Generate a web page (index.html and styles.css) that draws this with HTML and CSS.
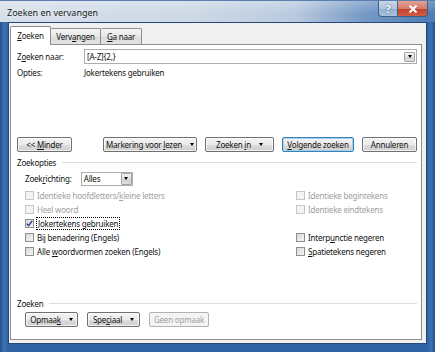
FILE: index.html
```html
<!DOCTYPE html>
<html lang="nl">
<head>
  <meta charset="UTF-8" />
  <title>Zoeken en vervangen</title>
  <link rel="stylesheet" href="styles.css">
</head>
<body>

<div class="window">
  <div class="titlebar">
    <span class="title">Zoeken en vervangen</span>
    <div class="caption">
      <span class="cap-btn help">?</span>
      <span class="cap-btn close">
        <svg width="10" height="8" viewBox="0 0 10 8"><path d="M1.5 0.5 L8.5 7.5 M8.5 0.5 L1.5 7.5" stroke="#fff" stroke-width="2"/></svg>
      </span>
    </div>
  </div>

  <div class="frame">
    <div class="client">
      <div class="tabs">
        <div class="tab active"><u>Z</u>oeken</div>
        <div class="tab">Verv<u>a</u>ngen</div>
        <div class="tab"><u>G</u>a naar</div>
      </div>

      <div class="panel">
        <div class="row find-row">
          <span class="label">Z<u>o</u>eken naar:</span>
          <div class="combo">
            <span class="combo-text">[A-Z]{2,}</span>
            <span class="drop"><i class="arrow"></i></span>
          </div>
        </div>
        <div class="row options-row">
          <span class="label">Opties:</span>
          <span>Jokertekens gebruiken</span>
        </div>

        <div class="buttons">
          <span class="btn w-minder"><span>&lt;&lt; <u>M</u>inder</span></span>
          <span class="btn w-mark"><span>Markering voor <u>l</u>ezen</span><i class="arrow"></i></span>
          <span class="btn w-in"><span>Zoeken <u>i</u>n</span><i class="arrow"></i></span>
          <span class="btn default w-next"><span><u>V</u>olgende zoeken</span></span>
          <span class="btn w-cancel"><span>Annuleren</span></span>
        </div>

        <div class="group-head first">
          <span>Zoekopties</span>
          <span class="rule"></span>
        </div>

        <div class="direction">
          <span>Zoek<u>r</u>ichting:</span>
          <div class="select">
            <span class="select-text">Alles</span>
            <span class="drop"><i class="arrow"></i></span>
          </div>
        </div>

        <div class="checks">
          <label class="check disabled"><span class="cb"></span><span>Identieke hoofdletters/<u>k</u>leine letters</span></label>
          <label class="check disabled"><span class="cb"></span><span>Identieke begintekens</span></label>
          <label class="check disabled"><span class="cb"></span><span>Heel woord</span></label>
          <label class="check disabled"><span class="cb"></span><span>Identieke eindtekens</span></label>
          <label class="check"><span class="cb checked"><svg width="7" height="7" viewBox="0 0 7 7"><path d="M0.8 3.6 L2.6 5.6 L6.2 0.8" fill="none" stroke="#24399b" stroke-width="1.4"/></svg></span><span class="focus"><u>J</u>okertekens gebruiken</span></label>
          <span></span>
          <label class="check"><span class="cb"></span><span>Bij benadering (En<u>g</u>els)</span></label>
          <label class="check"><span class="cb"></span><span>Interp<u>u</u>nctie negeren</span></label>
          <label class="check"><span class="cb"></span><span>Alle <u>w</u>oordvormen zoeken (Engels)</span></label>
          <label class="check"><span class="cb"></span><span><u>S</u>patietekens negeren</span></label>
        </div>

        <div class="group-head second">
          <span>Zoeken</span>
          <span class="rule"></span>
        </div>

        <div class="buttons bottom">
          <span class="btn w-fmt"><span>Opmaa<u>k</u></span><i class="arrow"></i></span>
          <span class="btn w-spec"><span>Spe<u>c</u>iaal</span><i class="arrow"></i></span>
          <span class="btn disabled w-none"><span>Geen opmaak</span></span>
        </div>
      </div>
    </div>
  </div>
</div>

</body>
</html>
```

FILE: styles.css
```css
html, body {
  margin: 0;
  padding: 0;
  background: #fff;
}

body {
  font-family: 'Noto Sans', 'Liberation Sans', sans-serif;
  font-size: 8px;
  letter-spacing: -0.2px;
  color: #111;
}

u {
  text-decoration: underline;
  text-underline-offset: 1px;
}

.window {
  width: 435px;
  height: 352px;
  display: flex;
  flex-direction: column;
  background: linear-gradient(90deg, #24518c 0px, #3d73b3 4px, #2f62a2 8px, #2f62a2 427px, #3d73b3 431px, #24518c 435px);
  box-sizing: border-box;
  overflow: hidden;
}

/* title bar */
.titlebar {
  height: 22px;
  display: flex;
  align-items: flex-start;
  justify-content: space-between;
  background:
    linear-gradient(180deg, rgba(255, 255, 255, 0.25), rgba(255, 255, 255, 0) 60%),
    linear-gradient(90deg, #d7e0eb 0%, #cdd8e6 45%, #b9cadf 68%, #7598c5 84%, #4d7bb4 100%);
  border-top: 1px solid #5a7fae;
  box-sizing: border-box;
}

.title {
  font-size: 9px;
  letter-spacing: 0;
  margin: 5px 0 0 7px;
  color: #1a1a1a;
  text-shadow: 0 0 4px #fff;
}

.caption {
  display: flex;
  margin-right: 7px;
}

.cap-btn {
  height: 16px;
  display: flex;
  align-items: center;
  justify-content: center;
  border: 1px solid #3e5f8a;
  border-top: none;
  box-sizing: border-box;
}

.help {
  width: 20px;
  border-radius: 0 0 0 4px;
  background: linear-gradient(#c9d6e6 0%, #b3c5dc 50%, #93aece 51%, #a9c1dd 100%);
  color: #fff;
  font-weight: bold;
  font-size: 10px;
  text-shadow: 0 0 2px #2c4e7c;
}

.close {
  width: 30px;
  border-left: none;
  border-radius: 0 0 4px 0;
  background: linear-gradient(#e3a293 0%, #d67b6a 50%, #c2412b 51%, #d25c45 100%);
}

/* frame + client */
.frame {
  flex: 1;
  padding: 0 8px 8px 8px;
  display: flex;
}

.client {
  flex: 1;
  background: #f0f0f0;
  border: 1px solid #25487a;
  padding: 3px 4px 3px 1px;
  display: flex;
  flex-direction: column;
}

.tabs {
  display: flex;
  height: 18px;
  align-items: flex-end;
  position: relative;
  z-index: 1;
}

.tab {
  height: 16px;
  line-height: 15px;
  text-align: center;
  border: 1px solid #8c8e94;
  border-bottom: none;
  border-left: none;
  box-sizing: border-box;
  background: linear-gradient(#f6f6f6, #e6e6e6 50%, #dadada 51%, #e4e4e4);
  border-radius: 2px 2px 0 0;
}

.tab:nth-child(2) { width: 50px; }
.tab:nth-child(3) { width: 41px; }

.tab.active {
  width: 41px;
  height: 19px;
  line-height: 18px;
  margin-bottom: -1px;
  background: #fff;
  border-left: 1px solid #8c8e94;
}

.panel {
  flex: 1;
  background: #fff;
  border: 1px solid #8c8e94;
  padding: 4px 4px 0 6px;
  display: flex;
  flex-direction: column;
}

.row {
  display: flex;
  align-items: center;
}

.label {
  width: 67px;
}

.find-row {
  height: 15px;
}

.combo {
  flex: 1;
  height: 15px;
  border: 1px solid #abadb3;
  box-sizing: border-box;
  display: flex;
  align-items: center;
  justify-content: space-between;
  padding-left: 2px;
}

.drop {
  width: 11px;
  height: 10px;
  margin-right: 1px;
  border: 1px solid #a4a4a4;
  border-radius: 1px;
  background: linear-gradient(#f4f4f4, #e2e2e2 50%, #d3d3d3 51%, #dcdcdc);
  display: flex;
  align-items: center;
  justify-content: center;
  box-sizing: border-box;
}

.arrow {
  display: inline-block;
  width: 0;
  height: 0;
  border-left: 2.5px solid transparent;
  border-right: 2.5px solid transparent;
  border-top: 3px solid #000;
}

.options-row {
  height: 12px;
  margin-top: 2px;
}

/* buttons */
.buttons {
  display: flex;
  margin-top: 59px;
  height: 15px;
}

.btn {
  height: 15px;
  box-sizing: border-box;
  border: 1px solid #707070;
  border-radius: 2px;
  background: linear-gradient(#f3f3f3, #ebebeb 50%, #dddddd 51%, #cfcfcf);
  display: flex;
  align-items: center;
  justify-content: center;
  gap: 8px;
  white-space: nowrap;
  box-shadow: inset 0 0 0 1px rgba(255, 255, 255, 0.7);
}

.btn.default {
  border-color: #3c7fb1;
  box-shadow: inset 0 0 0 1px #9ed3f3;
}

.btn.disabled {
  border-color: #adb2b5;
  background: #f4f4f4;
  color: #a0a0a0;
  box-shadow: none;
}

.w-minder { width: 55px; }
.w-mark { width: 94px; margin-left: 31px; }
.w-in { width: 69px; margin-left: 8px; }
.w-next { width: 72px; margin-left: 8px; }
.w-cancel { width: 55px; margin-left: 8px; }

.buttons.bottom {
  margin-top: 3px;
  padding-left: 8px;
}

.w-fmt { width: 53px; }
.w-spec { width: 53px; margin-left: 9px; }
.w-none { width: 60px; margin-left: 9px; }

/* group headers */
.group-head {
  display: flex;
  align-items: center;
  gap: 6px;
  height: 12px;
}

.group-head.first { margin-top: 4px; }
.group-head.second { margin-top: 39px; }

.rule {
  flex: 1;
  height: 1px;
  background: #d5dfe5;
}

.direction {
  display: flex;
  align-items: center;
  gap: 9px;
  margin-top: 3px;
  height: 15px;
  padding-left: 8px;
}

.select {
  width: 52px;
  height: 14px;
  border: 1px solid #abadb3;
  box-sizing: border-box;
  display: flex;
  align-items: center;
  justify-content: space-between;
  padding-left: 2px;
}

.select .drop {
  margin-right: 0;
  height: 12px;
}

/* checkboxes */
.checks {
  display: grid;
  grid-template-columns: 271px auto;
  grid-auto-rows: 14px;
  margin-top: 2px;
  padding-left: 8px;
}

.check {
  display: flex;
  align-items: center;
  gap: 3px;
  white-space: nowrap;
}

.check.disabled {
  color: #a0a0a0;
}

.cb {
  width: 9px;
  height: 9px;
  box-sizing: border-box;
  border: 1px solid #8e8f8f;
  background: linear-gradient(135deg, #d8d8d8, #f6f6f6);
  display: flex;
  align-items: center;
  justify-content: center;
}

.check.disabled .cb {
  border-color: #c6c6c6;
  background: #f4f4f4;
}

.focus {
  outline: 1px dotted #000;
  outline-offset: 0;
  padding: 0 1px;
}
```
